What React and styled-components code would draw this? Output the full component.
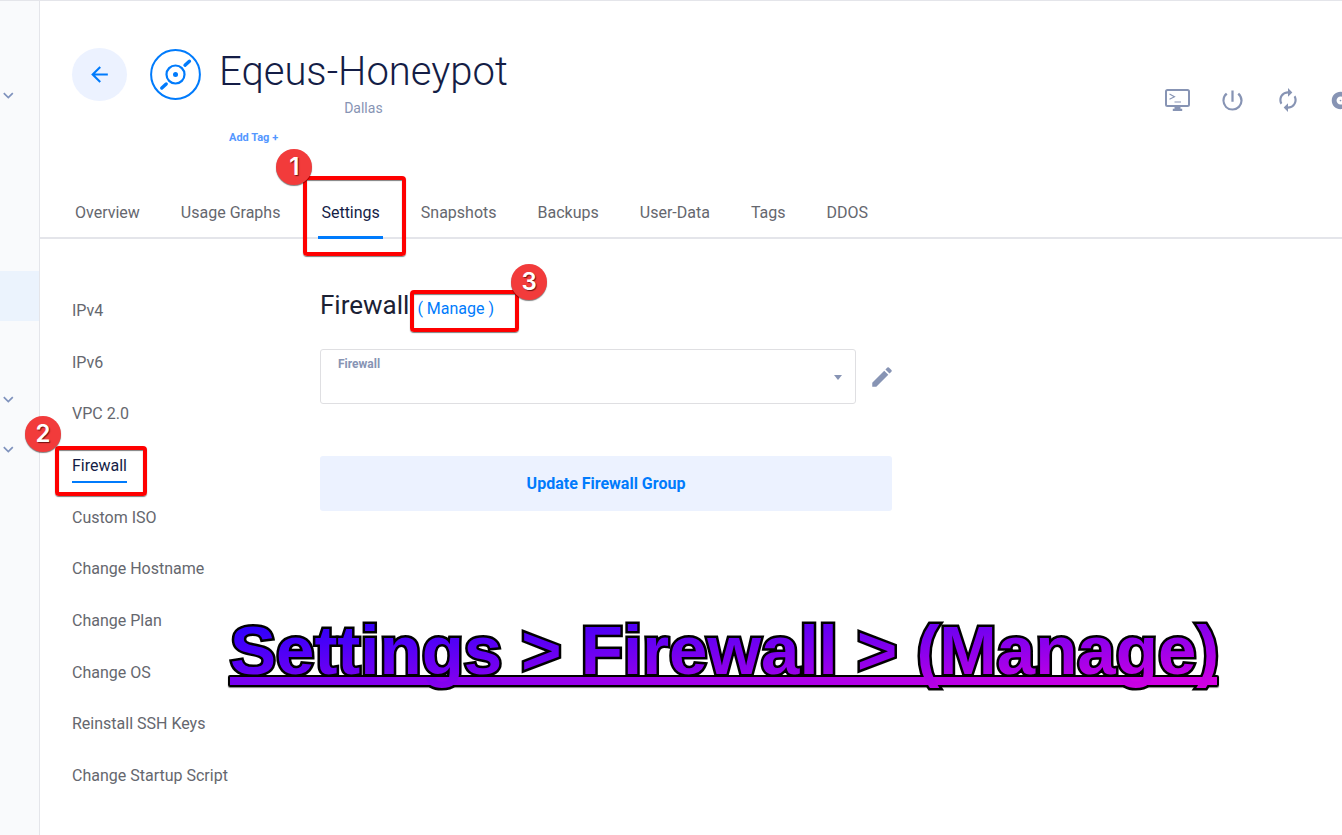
import React from "react";
import styled, { createGlobalStyle } from "styled-components";
import {
  MdAlbum,
  MdArrowBack,
  MdAutorenew,
  MdEdit,
  MdPowerSettingsNew,
} from "react-icons/md";

const GlobalStyle = createGlobalStyle`
  *, *::before, *::after { box-sizing: border-box; }
  body {
    margin: 0;
    background: #fff;
    font-family: Roboto, "Liberation Sans", sans-serif;
    font-size: 16px;
    color: #65676e;
  }
  button { font-family: inherit; cursor: pointer; }
`;

const Page = styled.div`
  position: relative;
  display: flex;
  min-height: 100vh;
  overflow: hidden;
  border-top: 1px solid #e4e5ea;
`;

const Rail = styled.nav`
  flex: none;
  width: 40px;
  padding-top: 70px;
  background: #f9fafc;
  border-right: 1px solid #e4e5ea;
`;

const RailItem = styled.button`
  display: flex;
  align-items: center;
  width: 100%;
  height: 50px;
  padding: 0 0 0 3px;
  border: 0;
  background: ${(p) => (p.$active ? "#ebf3fd" : "transparent")};
  margin-bottom: ${(p) => (p.$active ? "4px" : "0")};
`;

const Main = styled.main`
  flex: 1;
  min-width: 0;
`;

const Header = styled.header`
  display: flex;
  align-items: flex-start;
  height: 137px;
  padding: 47px 0 0 32px;
`;

const Identity = styled.div`
  display: flex;
  align-items: center;
  gap: 23px;
`;

const BackButton = styled.button`
  display: grid;
  place-items: center;
  width: 55px;
  height: 53px;
  padding: 0;
  border: 0;
  border-radius: 50%;
  background: #ecf2ff;
  color: #007bfc;
`;

const Titles = styled.div`
  display: flex;
  flex-direction: column;
  margin-left: 18px;
`;

const ServerName = styled.h1`
  margin: 0;
  font-size: 40px;
  font-weight: 300;
  line-height: 48px;
  color: #141d46;
`;

const Location = styled.span`
  align-self: center;
  font-size: 14px;
  line-height: 24px;
  color: #8794b4;
`;

const AddTag = styled.button`
  align-self: flex-start;
  margin-left: 10px;
  padding: 10px 0 0;
  border: 0;
  background: none;
  font-size: 11px;
  font-weight: 700;
  line-height: 16px;
  color: #5497ff;
`;

const Actions = styled.div`
  display: flex;
  gap: 30px;
  margin: 39px -8px 0 auto;
`;

const IconButton = styled.button`
  display: flex;
  flex: none;
  align-items: center;
  justify-content: center;
  width: ${(p) => (p.$narrow ? "20px" : "25px")};
  height: 26px;
  padding: 0;
  border: 0;
  background: none;
  color: #8794b4;

  svg { flex: none; }
`;

const Tabs = styled.nav`
  display: flex;
  gap: 35px;
  height: 101px;
  padding: 61px 0 0 32px;
  border-bottom: 2px solid #e4e5ea;
`;

const Tab = styled.a`
  position: relative;
  height: 40px;
  padding: 3px 3px 0;
  line-height: 22px;
  text-decoration: none;
  border-bottom: 3px solid ${(p) => (p.$active ? "#007bfc" : "transparent")};
  color: ${(p) => (p.$active ? "#141d46" : "inherit")};
`;

const Columns = styled.div`
  display: flex;
  padding: 45px 32px 34px;
`;

const SideMenu = styled.nav`
  display: grid;
  grid-template-rows: repeat(10, 1fr);
  justify-items: start;
  align-items: center;
  flex: none;
  width: 248px;
  min-height: 517px;
`;

const SideLink = styled.a`
  position: relative;
  padding: 8px 0 4px;
  line-height: 22px;
  text-decoration: none;
  border-bottom: 2px solid ${(p) => (p.$active ? "#007bfc" : "transparent")};
  color: ${(p) => (p.$active ? "#141d46" : "inherit")};
`;

const Panel = styled.section`
  flex: 0 1 572px;
  padding-top: 6px;
`;

const PanelHead = styled.div`
  display: flex;
  align-items: baseline;
  gap: 8px;
  margin-bottom: 29px;
`;

const PanelTitle = styled.h2`
  margin: 0;
  font-size: 26px;
  font-weight: 400;
  line-height: 30px;
  color: #1b2134;
`;

const ManageLink = styled.a`
  position: relative;
  color: #007bfc;
  text-decoration: none;
`;

const FieldRow = styled.div`
  display: flex;
  align-items: center;
  gap: 16px;
  margin-bottom: 52px;
`;

const SelectBox = styled.div`
  position: relative;
  flex: 1;

  label {
    position: absolute;
    top: 8px;
    left: 18px;
    font-size: 12px;
    font-weight: 700;
    line-height: 14px;
    color: #8794b4;
    pointer-events: none;
  }

  select {
    display: block;
    width: 100%;
    height: 55px;
    padding: 20px 32px 0 18px;
    appearance: none;
    border: 1px solid #dfdfe2;
    border-radius: 3px;
    background: #fff;
    font: inherit;
  }

  svg {
    position: absolute;
    top: 26px;
    right: 14px;
    pointer-events: none;
  }
`;

const UpdateButton = styled.button`
  width: 100%;
  height: 55px;
  border: 0;
  border-radius: 3px;
  background: #ecf2ff;
  font-size: 16px;
  font-weight: 700;
  color: #007bfc;
`;

const Highlight = styled.span`
  position: absolute;
  z-index: 2;
  inset: ${(p) => p.$inset};
  border: 4px solid #fe0000;
  border-radius: 4px;
  box-shadow: 0 1px 1px rgba(0, 0, 0, 0.5), inset 0 1px 1px rgba(0, 0, 0, 0.5);
  pointer-events: none;
`;

const Badge = styled.span`
  position: absolute;
  inset: ${(p) => p.$inset};
  display: grid;
  place-items: center;
  width: 36px;
  height: 36px;
  border-radius: 50%;
  background: #f23b3b;
  box-shadow: 0 1px 1px rgba(0, 0, 0, 0.5);
  font-family: Inter, "Liberation Sans", sans-serif;
  font-size: 24px;
  font-weight: 600;
  line-height: 36px;
  color: #fff;
  text-shadow: 1px 1px 1px rgba(60, 0, 0, 0.7);
`;

const Caption = styled.p`
  position: absolute;
  z-index: 3;
  top: 611px;
  left: 230px;
  margin: 0;
  isolation: isolate;
  font-family: "Liberation Sans", Arial, sans-serif;
  font-size: 69px;
  font-weight: 700;
  line-height: 78px;
  white-space: nowrap;

  &::before {
    content: attr(data-text);
    position: absolute;
    z-index: -2;
    inset: 0;
    color: #000;
    -webkit-text-stroke: 5px #000;
    stroke-linejoin: round;
  }

  &::after {
    content: "";
    position: absolute;
    z-index: -1;
    right: 0;
    bottom: 3px;
    left: -2px;
    height: 12px;
    border: 2px solid #000;
    border-radius: 2px;
    background: linear-gradient(to right, #7600f0, #d400e2);
    box-shadow: 0 1px 1px rgba(0, 0, 0, 0.5);
  }
`;

const CaptionFill = styled.span`
  display: block;
  background: linear-gradient(to bottom right, #1c00ff, #7600f0 50%, #d800e0);
  background-clip: text;
  -webkit-background-clip: text;
  color: transparent;
`;

const Chevron = () => (
  <svg width="11" height="8" viewBox="0 0 11 8" fill="none" stroke="#7f92bd" strokeWidth="1.7">
    <path d="M.8 1.2 5.3 5.6 9.8 1.2" />
  </svg>
);

const ServerLogo = () => (
  <svg width="51" height="51" viewBox="0 0 51 51" fill="none" stroke="#007bfc">
    <circle cx="25.5" cy="25.5" r="24.4" strokeWidth="2" />
    <circle cx="25.5" cy="25.5" r="9" strokeWidth="2.2" />
    <circle cx="25.5" cy="25.5" r="2.5" fill="#007bfc" stroke="none" />
    <path d="M35 16.2 39.4 12.2M16.2 35 11.800 39" strokeWidth="3.4" strokeLinecap="round" />
  </svg>
);

const ConsoleIcon = () => (
  <svg width="25" height="23" viewBox="0 0 25 23" fill="none" stroke="currentColor">
    <rect x="1" y="1" width="23" height="16" rx="1.5" strokeWidth="2" />
    <path d="M4.5 5 9.5 7.8 4.5 10.2M9.5 13H16" strokeWidth="1.1" />
    <path d="M9.5 17.5h6v2.2h1.7V22H7.8v-2.3h1.7z" fill="currentColor" stroke="none" />
  </svg>
);

const railItems = [
  { name: "Products", chevron: true },
  { name: "Compute" },
  { name: "Storage" },
  { name: "Network" },
  { name: "Servers", active: true },
  { name: "Billing" },
  { name: "Support", chevron: true },
  { name: "Account", chevron: true },
];

const tabs = ["Overview", "Usage Graphs", "Settings", "Snapshots", "Backups", "User-Data", "Tags", "DDOS"];

const sideLinks = [
  "IPv4",
  "IPv6",
  "VPC 2.0",
  "Firewall",
  "Custom ISO",
  "Change Hostname",
  "Change Plan",
  "Change OS",
  "Reinstall SSH Keys",
  "Change Startup Script",
];

const captionText = "Settings > Firewall > (Manage)";

export default function App() {
  return (
    <>
      <GlobalStyle />
      <Page>
        <Rail>
          {railItems.map((item) => (
            <RailItem key={item.name} aria-label={item.name} $active={item.active}>
              {item.chevron && <Chevron />}
            </RailItem>
          ))}
        </Rail>
        <Main>
          <Header>
            <Identity>
              <BackButton aria-label="Back">
                <MdArrowBack size={25} />
              </BackButton>
              <ServerLogo />
            </Identity>
            <Titles>
              <ServerName>Eqeus-Honeypot</ServerName>
              <Location>Dallas</Location>
              <AddTag>Add Tag +</AddTag>
            </Titles>
            <Actions>
              <IconButton aria-label="Console"><ConsoleIcon /></IconButton>
              <IconButton aria-label="Power"><MdPowerSettingsNew size={27} /></IconButton>
              <IconButton aria-label="Restart"><MdAutorenew size={26} /></IconButton>
              <IconButton $narrow aria-label="Reinstall"><MdAlbum size={21} /></IconButton>
            </Actions>
          </Header>
          <Tabs>
            {tabs.map((name) => (
              <Tab key={name} href="#" $active={name === "Settings"}>
                {name}
                {name === "Settings" && (
                  <Highlight $inset="-23px -23px -20px -15px">
                    <Badge $inset="-31px auto auto -31px">1</Badge>
                  </Highlight>
                )}
              </Tab>
            ))}
          </Tabs>
          <Columns>
            <SideMenu>
              {sideLinks.map((name) => (
                <SideLink key={name} href="#" $active={name === "Firewall"}>
                  {name}
                  {name === "Firewall" && (
                    <Highlight $inset="-1px -20px -15px -17px">
                      <Badge $inset="-34px auto auto -34px">2</Badge>
                    </Highlight>
                  )}
                </SideLink>
              ))}
            </SideMenu>
            <Panel>
              <PanelHead>
                <PanelTitle>Firewall</PanelTitle>
                <ManageLink href="#">
                  ( Manage )
                  <Highlight $inset="-9px -25px -14px -7px">
                    <Badge $inset="-30px -32px auto auto">3</Badge>
                  </Highlight>
                </ManageLink>
              </PanelHead>
              <FieldRow>
                <SelectBox>
                  <label htmlFor="firewall">Firewall</label>
                  <select id="firewall" defaultValue="">
                    <option value=""></option>
                  </select>
                  <svg width="8" height="5" viewBox="0 0 8 5">
                    <path d="M0 0h8L4 5z" fill="#8794b4" />
                  </svg>
                </SelectBox>
                <IconButton $narrow aria-label="Edit firewall"><MdEdit size={26} /></IconButton>
              </FieldRow>
              <UpdateButton>Update Firewall Group</UpdateButton>
            </Panel>
          </Columns>
        </Main>
        <Caption data-text={captionText}>
          <CaptionFill>{captionText}</CaptionFill>
        </Caption>
      </Page>
    </>
  );
}
